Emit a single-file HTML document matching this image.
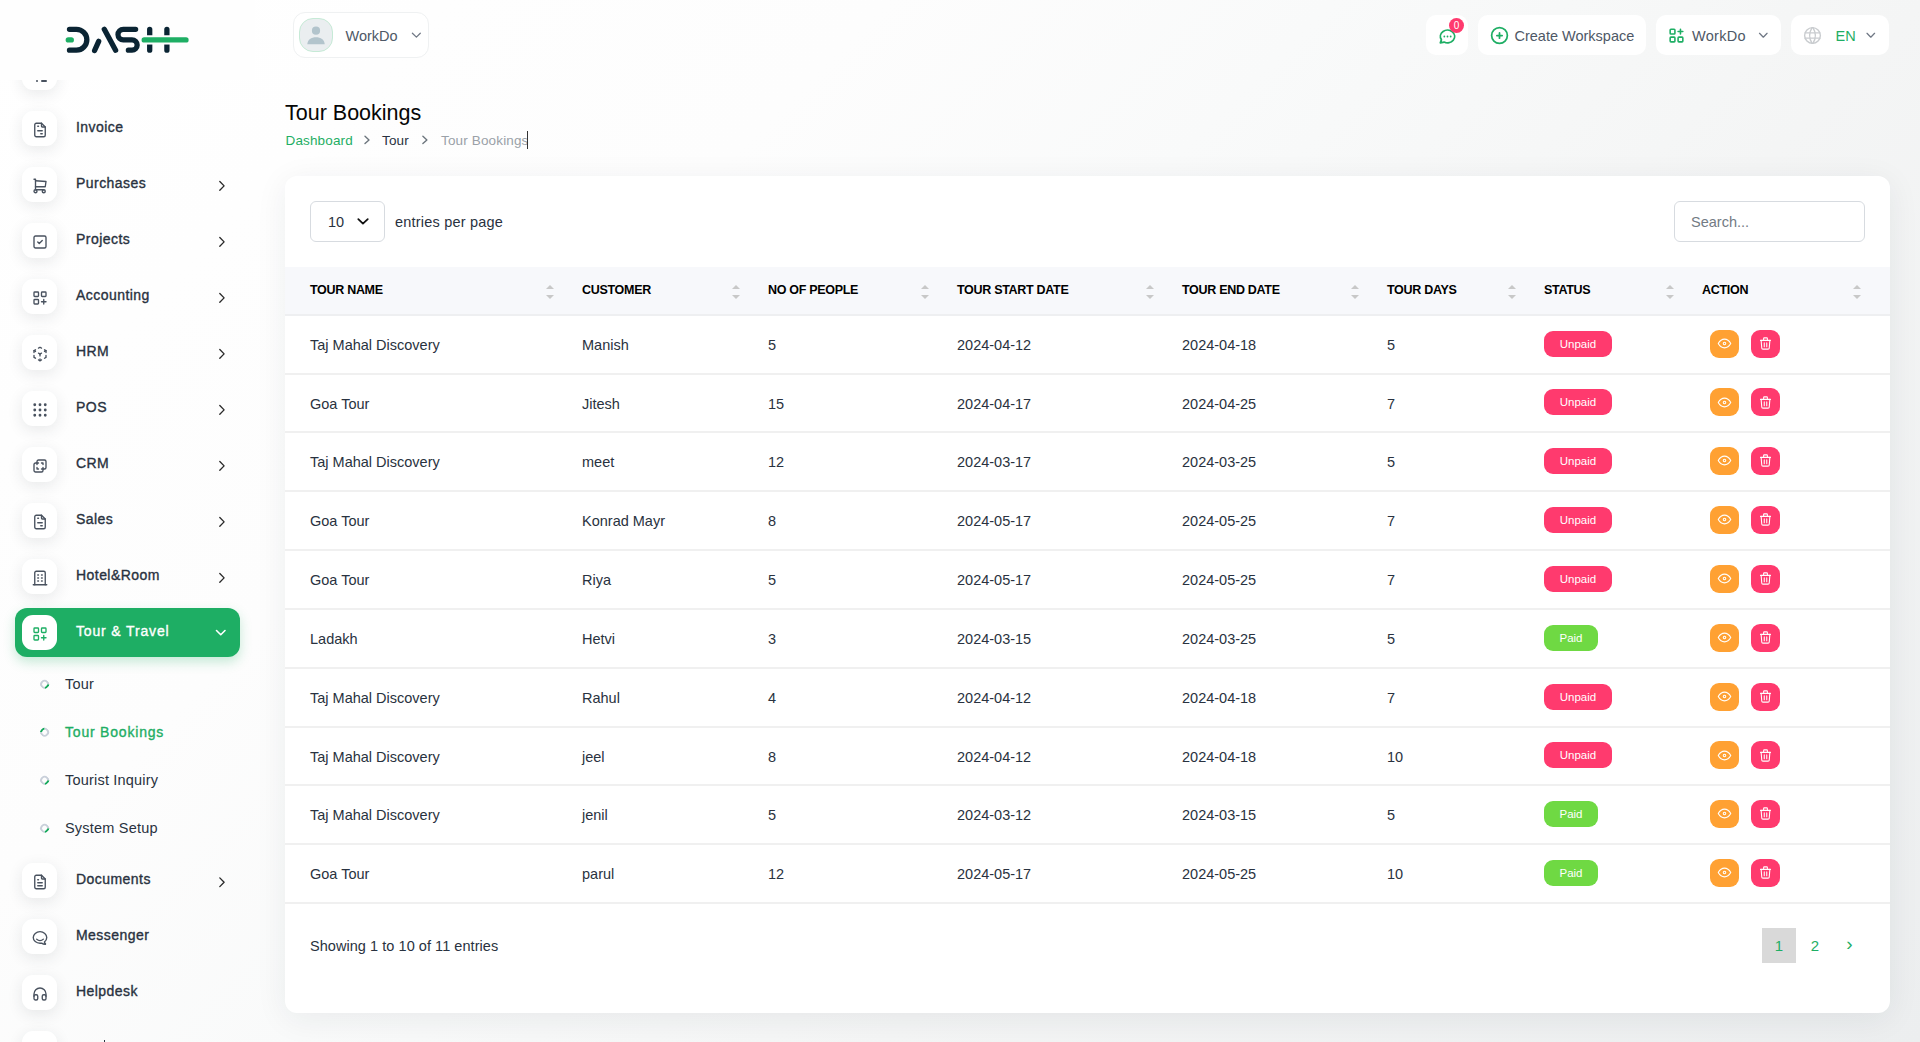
<!DOCTYPE html>
<html><head><meta charset="utf-8">
<style>
*{box-sizing:border-box;margin:0;padding:0}
html,body{width:1920px;height:1042px;overflow:hidden}
body{font-family:"Liberation Sans",sans-serif;color:#293240;position:relative;
background:linear-gradient(135deg,#ffffff 0%,#fdfdfd 30%,#f9fafa 45%,#f4f5f5 65%,#eceeef 100%)}
svg{display:block}
.sb-cover{position:absolute;left:0;top:0;width:255px;height:80px;background:#fefefe;z-index:5}
.ibox{position:absolute;left:22px;width:35px;height:35px;border-radius:11px;background:#fff;
box-shadow:0 4px 15px rgba(40,50,60,.1);display:flex;align-items:center;justify-content:center}
.ibox svg{width:18px;height:18px;margin-top:2px;fill:none;stroke:#49525f;stroke-width:1.8;stroke-linecap:round;stroke-linejoin:round}
.stxt{position:absolute;left:76px;font-size:14px;font-weight:400;letter-spacing:.45px;-webkit-text-stroke:.35px currentColor;color:#293240;white-space:nowrap;line-height:20px}
.chev{position:absolute;left:216px;width:10px;height:10px}
.chev svg{width:10px;height:10px;fill:none;stroke:#293240;stroke-width:2.6;stroke-linecap:round;stroke-linejoin:round}
.chev-w svg{stroke:#fff}
.active-pill{position:absolute;left:15px;top:608px;width:225px;height:49px;border-radius:12px;background:#1eae64;box-shadow:0 5px 12px rgba(30,174,100,.25)}
.act-ibox{box-shadow:none}
.act-ibox svg{stroke:#1eae64}
.sub{position:absolute;left:65px;font-size:14.5px;color:#293240;white-space:nowrap;line-height:20px;letter-spacing:.2px}
.sub-act{color:#1eae64;font-size:14px;letter-spacing:.8px;-webkit-text-stroke:.35px currentColor}
.bul{position:absolute;left:40px;width:8.5px;height:8.5px;border-radius:50%;border:2px solid #c9d0da;border-bottom-color:#13a85a;transform:rotate(-45deg)}
.bul-act{border-bottom-color:#c9d0da;border-top-color:#13a85a}
.hdd{position:absolute;border:1px solid #eff1f2;border-radius:12px;background:#fff}
.avatar{position:absolute;left:299px;top:18px;width:34px;height:34px;border-radius:14px;background:#eaeef0;border:1px solid #c6ead6;overflow:hidden}
.htxt{position:absolute;font-size:14.5px;color:#4e5866;white-space:nowrap;line-height:20px;margin-top:1px}
.hchev{position:absolute;width:12px;height:12px}
.hchev svg{width:12px;height:12px;fill:none;stroke:#5d6672;stroke-width:2;stroke-linecap:round;stroke-linejoin:round}
.hbtn{position:absolute;top:15px;height:40px;background:#fff;border-radius:10px}
.gicon{position:absolute}
.gicon svg{width:100%;height:100%;fill:none;stroke:#1eae64;stroke-width:2;stroke-linecap:round;stroke-linejoin:round}
.globe svg{stroke:#c9cccf;stroke-width:1.6}
.en{color:#1eae64}
.nbadge{position:absolute;left:23px;top:2.5px;width:15px;height:15px;border-radius:50%;background:#ff3a6e;color:#fff;font-size:10px;line-height:15px;text-align:center}
.title{position:absolute;left:285px;top:100px;font-size:21.5px;color:#060606;white-space:nowrap;line-height:26px}
.bc{position:absolute;top:132px;font-size:13.5px;letter-spacing:.15px;white-space:nowrap;line-height:18px}
.bchev{position:absolute;top:134px;width:10px;height:10px}
.bchev svg{width:10px;height:10px;fill:none;stroke:#6c757d;stroke-width:2;stroke-linecap:round;stroke-linejoin:round}
.card{position:absolute;left:285px;top:176px;width:1605px;height:837px;background:#fff;border-radius:12px;box-shadow:0 6px 32px rgba(30,40,50,.07)}
.sel{position:absolute;left:25px;top:25px;width:75px;height:41px;border:1px solid #d7dbe0;border-radius:6px}
.seltxt{position:absolute;left:17px;top:10px;font-size:14.5px;color:#293240;line-height:20px}
.selchev{position:absolute;left:46px;top:14px;width:13px;height:13px}
.selchev svg{width:13px;height:13px;fill:none;stroke:#222;stroke-width:2.2;stroke-linecap:round;stroke-linejoin:round}
.ctxt{position:absolute;font-size:14.5px;letter-spacing:.2px;color:#293240;white-space:nowrap;line-height:20px}
.search{position:absolute;left:1389px;top:25px;width:191px;height:41px;border:1px solid #d7dbe0;border-radius:6px}
.search span{position:absolute;left:16px;top:10px;font-size:14.5px;color:#737b84;line-height:20px}
.thead{position:absolute;left:0;top:91px;width:1605px;height:49px;background:#f7f8fb;border-bottom:2px solid #eeeff1}
.th{position:absolute;top:90px;height:48px;line-height:48px;font-size:12.5px;font-weight:700;color:#000;white-space:nowrap;letter-spacing:-.3px}
.sort{position:absolute;top:109px;width:8px;height:14px}
.sort:before,.sort:after{content:"";position:absolute;left:0;border-left:4px solid transparent;border-right:4px solid transparent}
.sort:before{top:0;border-bottom:4px solid #c8c8c8}
.sort:after{top:9.5px;border-top:4px solid #c8c8c8}
.rline{position:absolute;left:0;width:1605px;height:2px;background:#f0f0f0}
.td{position:absolute;font-size:14.5px;color:#293240;white-space:nowrap;line-height:21px;margin-top:1px}
.badge{position:absolute;height:26px;border-radius:9px;color:#fff;font-size:11.5px;line-height:26px;text-align:center}
.unpaid{background:#ff3a6e}
.paid{background:#6fd943}
.act{position:absolute;width:29px;height:28px;border-radius:9px;display:flex;align-items:center;justify-content:center}
.act svg{width:15px;height:15px;fill:none;stroke:#fff;stroke-width:1.7;stroke-linecap:round;stroke-linejoin:round}
.orange{background:#ffa133}
.pink{background:#ff3a6e}
.pg1{position:absolute;left:1477px;top:752px;width:34px;height:35px;background:#d9d9d9;color:#1eae64;font-size:15px;line-height:35px;text-align:center}
.pgn{position:absolute;top:752px;width:34px;height:35px;color:#1eae64;font-size:15px;line-height:35px;text-align:center}

</style></head><body>
<div class="ibox" style="top:55.0px"><svg viewBox="0 0 24 24" class="" ></svg></div>
<div class="ibox" style="top:111.0px"><svg viewBox="0 0 24 24" class="" ><path d="M14 3v4a1 1 0 0 0 1 1h4"/><path d="M17 21h-10a2 2 0 0 1 -2 -2v-14a2 2 0 0 1 2 -2h7l5 5v11a2 2 0 0 1 -2 2z"/><path d="M9 7h1"/><path d="M9 13h6"/><path d="M13 17h2"/></svg></div>
<div class="stxt" style="top:117.0px">Invoice</div>
<div class="ibox" style="top:167.0px"><svg viewBox="0 0 24 24" class="" ><circle cx="6" cy="19" r="2"/><circle cx="17" cy="19" r="2"/><path d="M17 17h-11v-14h-2"/><path d="M6 5l14 1l-1 7h-13"/></svg></div>
<div class="stxt" style="top:173.0px">Purchases</div>
<div class="ibox" style="top:223.0px"><svg viewBox="0 0 24 24" class="" ><rect x="4" y="4" width="16" height="16" rx="2"/><path d="M9 12l2 2l4 -4"/></svg></div>
<div class="stxt" style="top:229.0px">Projects</div>
<div class="ibox" style="top:279.0px"><svg viewBox="0 0 24 24" class="" ><rect x="4" y="4" width="6" height="6" rx="1"/><rect x="14" y="4" width="6" height="6" rx="1"/><rect x="4" y="14" width="6" height="6" rx="1"/><path d="M14 17h6m-3 -3v6"/></svg></div>
<div class="stxt" style="top:285.0px">Accounting</div>
<div class="ibox" style="top:335.0px"><svg viewBox="0 0 24 24" class="" ><path d="M6 17.6l-2 -1.1v-2.5"/><path d="M4 10v-2.5l2 -1.1"/><path d="M10 4.1l2 -1.1l2 1.1"/><path d="M18 6.4l2 1.1v2.5"/><path d="M20 14v2.5l-2 1.12"/><path d="M14 19.9l-2 1.1l-2 -1.1"/><path d="M12 12l2 -1.1"/><path d="M18 8.6l2 -1.1"/><path d="M12 12v2.5"/><path d="M12 18.5v2.5"/><path d="M12 12l-2 -1.12"/><path d="M6 8.6l-2 -1.1"/></svg></div>
<div class="stxt" style="top:341.0px">HRM</div>
<div class="ibox" style="top:391.0px"><svg viewBox="0 0 24 24" class="" ><circle cx="5" cy="5" r="1"/><circle cx="12" cy="5" r="1"/><circle cx="19" cy="5" r="1"/><circle cx="5" cy="12" r="1"/><circle cx="12" cy="12" r="1"/><circle cx="19" cy="12" r="1"/><circle cx="5" cy="19" r="1"/><circle cx="12" cy="19" r="1"/><circle cx="19" cy="19" r="1"/></svg></div>
<div class="stxt" style="top:397.0px">POS</div>
<div class="ibox" style="top:447.0px"><svg viewBox="0 0 24 24" class="" ><path d="M16 16v2a2 2 0 0 1 -2 2h-8a2 2 0 0 1 -2 -2v-8a2 2 0 0 1 2 -2h2v-2a2 2 0 0 1 2 -2h8a2 2 0 0 1 2 2v8a2 2 0 0 1 -2 2h-2"/><path d="M10 8h-2v2"/><path d="M8 14v2h2"/><path d="M14 8h2v2"/><path d="M16 14v2h-2"/></svg></div>
<div class="stxt" style="top:453.0px">CRM</div>
<div class="ibox" style="top:503.0px"><svg viewBox="0 0 24 24" class="" ><path d="M14 3v4a1 1 0 0 0 1 1h4"/><path d="M17 21h-10a2 2 0 0 1 -2 -2v-14a2 2 0 0 1 2 -2h7l5 5v11a2 2 0 0 1 -2 2z"/><path d="M9 7h1"/><path d="M9 13h6"/><path d="M13 17h2"/></svg></div>
<div class="stxt" style="top:509.0px">Sales</div>
<div class="ibox" style="top:559.0px"><svg viewBox="0 0 24 24" class="" ><path d="M3 21h18"/><path d="M9 8h1"/><path d="M9 12h1"/><path d="M9 16h1"/><path d="M14 8h1"/><path d="M14 12h1"/><path d="M14 16h1"/><path d="M5 21v-16a2 2 0 0 1 2 -2h10a2 2 0 0 1 2 2v16"/></svg></div>
<div class="stxt" style="top:565.0px">Hotel&Room</div>
<div class="active-pill"></div>
<div class="ibox act-ibox" style="top:615px"><svg viewBox="0 0 24 24" class="" ><rect x="4" y="4" width="6" height="6" rx="1"/><rect x="14" y="4" width="6" height="6" rx="1"/><rect x="4" y="14" width="6" height="6" rx="1"/><path d="M14 17h6m-3 -3v6"/></svg></div>
<div class="stxt" style="top:620.5px;color:#fff;letter-spacing:.85px">Tour &amp; Travel</div>
<div class="bul" style="top:680.0px"></div>
<div class="sub" style="top:674.0px">Tour</div>
<div class="bul bul-act" style="top:728.0px"></div>
<div class="sub sub-act" style="top:722.0px">Tour Bookings</div>
<div class="bul" style="top:776.0px"></div>
<div class="sub" style="top:770.0px">Tourist Inquiry</div>
<div class="bul" style="top:824.0px"></div>
<div class="sub" style="top:818.0px">System Setup</div>
<div class="ibox" style="top:863.4px"><svg viewBox="0 0 24 24" class="" ><path d="M14 3v4a1 1 0 0 0 1 1h4"/><path d="M17 21h-10a2 2 0 0 1 -2 -2v-14a2 2 0 0 1 2 -2h7l5 5v11a2 2 0 0 1 -2 2z"/><path d="M9 9h1"/><path d="M9 13h6"/><path d="M9 17h6"/></svg></div>
<div class="stxt" style="top:869.4px">Documents</div>
<div class="ibox" style="top:919.4px"><svg viewBox="0 0 24 24" class="" ><path d="M17.802 17.292s.077 -.055 .2 -.149c1.843 -1.425 3 -3.49 3 -5.789c0 -4.286 -4.03 -7.764 -9 -7.764c-4.97 0 -9 3.478 -9 7.764c0 4.288 4.03 7.646 9 7.646c.424 0 1.12 -.028 2.088 -.084c1.262 .82 3.104 1.493 4.716 1.493c.499 0 .734 -.41 .414 -.828c-.486 -.596 -1.156 -1.551 -1.416 -2.29z"/><path d="M7.5 13.5c2.5 2.5 6.5 2.5 9 0"/></svg></div>
<div class="stxt" style="top:925.4px">Messenger</div>
<div class="ibox" style="top:975.4px"><svg viewBox="0 0 24 24" class="" ><path d="M4 15a2 2 0 0 1 2 -2h1a2 2 0 0 1 2 2v3a2 2 0 0 1 -2 2h-1a2 2 0 0 1 -2 -2v-3"/><path d="M15 15a2 2 0 0 1 2 -2h1a2 2 0 0 1 2 2v3a2 2 0 0 1 -2 2h-1a2 2 0 0 1 -2 -2v-3"/><path d="M4 15v-3a8 8 0 0 1 16 0v3"/></svg></div>
<div class="stxt" style="top:981.4px">Helpdesk</div>
<div class="ibox" style="top:1031.4px"><svg viewBox="0 0 24 24" class="" ></svg></div>
<div style="position:absolute;left:36px;top:80px;width:2px;height:1.5px;background:#49525f;border-radius:1px"></div><div style="position:absolute;left:41px;top:80px;width:6px;height:1.5px;background:#49525f;border-radius:1px"></div>
<div style="position:absolute;left:103.5px;top:1040.3px;width:1.6px;height:2px;background:#293240"></div>
<div class="sb-cover"></div>
<svg class="logo" viewBox="0 0 1920 1042" style="position:absolute;left:0;top:0;width:1920px;height:1042px;z-index:6;pointer-events:none">
<g fill="none" stroke-linecap="round" stroke-width="5.3">
<path stroke="#0a2433" d="M69.5 29.3H76.4A10.45 10.45 0 0 1 76.4 50.2H69.5"/>
<path stroke="#1eae64" d="M68.3 39.9H71.3"/>
<path stroke="#0a2433" d="M94.6 50.5L98.7 41.3M104.3 29.3L115.6 50.2"/>
<path stroke="#0a2433" d="M135.6 29.3H123.3A5.3 5.3 0 0 0 123.3 39.9H132A5.15 5.15 0 0 1 132 50.2H128.4"/>
<path stroke="#0a2433" d="M149.7 29.3V50.2M166.9 29.3V50.2"/>
<path stroke="#fdfdfd" stroke-width="9.3" stroke-linecap="butt" d="M145 39.9H171"/>
<path stroke="#1eae64" d="M144.2 39.9H186"/>
</g></svg>
<div class="hdd" style="left:293px;top:12px;width:136px;height:46px"></div>
<div class="avatar"><svg viewBox="0 0 34 34" width="34" height="34" style="position:absolute;left:-1px;top:-1px"><circle cx="17" cy="12.7" r="4.1" fill="#b2c4cc"/><path d="M8.3 26.2C8.5 21.8 12.3 19.2 17 19.2S25.5 21.8 25.7 26.2Z" fill="#b2c4cc"/></svg></div>
<div class="htxt" style="left:345.5px;top:25px">WorkDo</div>
<div class="hbtn" style="left:1426px;width:42px"><div class="gicon" style="left:11.5px;top:11.5px;width:19px;height:19px"><svg viewBox="0 0 24 24" class="" style="stroke-width:2.3"><path d="M3 20l1.3 -3.9c-2.324 -3.437 -1.426 -7.872 2.1 -10.374c3.526 -2.501 8.59 -2.296 11.845 .48c3.255 2.777 3.695 7.266 1.029 10.501c-2.666 3.235 -7.615 4.215 -11.574 2.293l-4.7 1"/><path d="M12 12v.01"/><path d="M8 12v.01"/><path d="M16 12v.01"/></svg></div><div class="nbadge">0</div></div>
<div class="hbtn" style="left:1478px;width:168px"><div class="gicon" style="left:10.5px;top:9.5px;width:21px;height:21px"><svg viewBox="0 0 24 24" class="" ><circle cx="12" cy="12" r="9"/><path d="M9 12h6"/><path d="M12 9v6"/></svg></div><div class="htxt" style="left:36.5px;top:10px">Create Workspace</div></div>
<div class="hbtn" style="left:1656px;width:125px"><div class="gicon" style="left:11px;top:11px;width:19px;height:19px"><svg viewBox="0 0 24 24" class="" ><rect x="4" y="4" width="6" height="6" rx="1"/><rect x="4" y="14" width="6" height="6" rx="1"/><rect x="14" y="14" width="6" height="6" rx="1"/><path d="M14 7h6m-3 -3v6"/></svg></div><div class="htxt" style="left:36px;top:10px;letter-spacing:.3px">WorkDo</div></div>
<div class="hbtn" style="left:1791px;width:98px"><div class="gicon globe" style="left:10.5px;top:9.5px;width:21px;height:21px"><svg viewBox="0 0 24 24" class="" ><circle cx="12" cy="12" r="9"/><path d="M3.6 9h16.8"/><path d="M3.6 15h16.8"/><path d="M11.5 3a17 17 0 0 0 0 18"/><path d="M12.5 3a17 17 0 0 1 0 18"/></svg></div><div class="htxt en" style="left:44.5px;top:10px">EN</div></div>
<div class="title">Tour Bookings</div>
<div class="bc" style="left:285.5px;color:#1eae64">Dashboard</div>
<div class="bc" style="left:382px;color:#293240">Tour</div>
<div class="bc" style="left:441px;color:#9aa1a8">Tour Bookings</div>
<div style="position:absolute;left:527px;top:131px;width:1px;height:18px;background:#333"></div>
<div class="card">
<div class="sel"><span class="seltxt">10</span></div>
<div class="ctxt" style="left:110px;top:35.5px">entries per page</div>
<div class="search"><span>Search...</span></div>
<div class="thead"></div>
<div class="th" style="left:25px">TOUR NAME</div>
<div class="sort" style="left:261px"></div>
<div class="th" style="left:297px">CUSTOMER</div>
<div class="sort" style="left:447px"></div>
<div class="th" style="left:483px">NO OF PEOPLE</div>
<div class="sort" style="left:636px"></div>
<div class="th" style="left:672px">TOUR START DATE</div>
<div class="sort" style="left:861px"></div>
<div class="th" style="left:897px">TOUR END DATE</div>
<div class="sort" style="left:1066px"></div>
<div class="th" style="left:1102px">TOUR DAYS</div>
<div class="sort" style="left:1223px"></div>
<div class="th" style="left:1259px">STATUS</div>
<div class="sort" style="left:1381px"></div>
<div class="th" style="left:1417px">ACTION</div>
<div class="sort" style="left:1568px"></div>
<div class="rline" style="top:197.00px"></div>
<div class="td" style="left:25px;top:158.00px">Taj Mahal Discovery</div>
<div class="td" style="left:297px;top:158.00px">Manish</div>
<div class="td" style="left:483px;top:158.00px">5</div>
<div class="td" style="left:672px;top:158.00px">2024-04-12</div>
<div class="td" style="left:897px;top:158.00px">2024-04-18</div>
<div class="td" style="left:1102px;top:158.00px">5</div>
<div class="badge unpaid" style="left:1259px;top:154.70px;width:68px">Unpaid</div>
<div class="act orange" style="left:1425px;top:153.50px"><svg viewBox="0 0 24 24" class="" ><circle cx="12" cy="12" r="2"/><path d="M22 12c-2.667 4.667 -6 7 -10 7s-7.333 -2.333 -10 -7c2.667 -4.667 6 -7 10 -7s7.333 2.333 10 7"/></svg></div>
<div class="act pink" style="left:1466px;top:153.50px"><svg viewBox="0 0 24 24" class="" ><path d="M4 7h16"/><path d="M10 11v6"/><path d="M14 11v6"/><path d="M5 7l1 12a2 2 0 0 0 2 2h8a2 2 0 0 0 2 -2l1 -12"/><path d="M9 7v-3a1 1 0 0 1 1 -1h4a1 1 0 0 1 1 1v3"/></svg></div>
<div class="rline" style="top:255.00px"></div>
<div class="td" style="left:25px;top:216.50px">Goa Tour</div>
<div class="td" style="left:297px;top:216.50px">Jitesh</div>
<div class="td" style="left:483px;top:216.50px">15</div>
<div class="td" style="left:672px;top:216.50px">2024-04-17</div>
<div class="td" style="left:897px;top:216.50px">2024-04-25</div>
<div class="td" style="left:1102px;top:216.50px">7</div>
<div class="badge unpaid" style="left:1259px;top:213.20px;width:68px">Unpaid</div>
<div class="act orange" style="left:1425px;top:212.00px"><svg viewBox="0 0 24 24" class="" ><circle cx="12" cy="12" r="2"/><path d="M22 12c-2.667 4.667 -6 7 -10 7s-7.333 -2.333 -10 -7c2.667 -4.667 6 -7 10 -7s7.333 2.333 10 7"/></svg></div>
<div class="act pink" style="left:1466px;top:212.00px"><svg viewBox="0 0 24 24" class="" ><path d="M4 7h16"/><path d="M10 11v6"/><path d="M14 11v6"/><path d="M5 7l1 12a2 2 0 0 0 2 2h8a2 2 0 0 0 2 -2l1 -12"/><path d="M9 7v-3a1 1 0 0 1 1 -1h4a1 1 0 0 1 1 1v3"/></svg></div>
<div class="rline" style="top:314.00px"></div>
<div class="td" style="left:25px;top:275.00px">Taj Mahal Discovery</div>
<div class="td" style="left:297px;top:275.00px">meet</div>
<div class="td" style="left:483px;top:275.00px">12</div>
<div class="td" style="left:672px;top:275.00px">2024-03-17</div>
<div class="td" style="left:897px;top:275.00px">2024-03-25</div>
<div class="td" style="left:1102px;top:275.00px">5</div>
<div class="badge unpaid" style="left:1259px;top:271.70px;width:68px">Unpaid</div>
<div class="act orange" style="left:1425px;top:270.50px"><svg viewBox="0 0 24 24" class="" ><circle cx="12" cy="12" r="2"/><path d="M22 12c-2.667 4.667 -6 7 -10 7s-7.333 -2.333 -10 -7c2.667 -4.667 6 -7 10 -7s7.333 2.333 10 7"/></svg></div>
<div class="act pink" style="left:1466px;top:270.50px"><svg viewBox="0 0 24 24" class="" ><path d="M4 7h16"/><path d="M10 11v6"/><path d="M14 11v6"/><path d="M5 7l1 12a2 2 0 0 0 2 2h8a2 2 0 0 0 2 -2l1 -12"/><path d="M9 7v-3a1 1 0 0 1 1 -1h4a1 1 0 0 1 1 1v3"/></svg></div>
<div class="rline" style="top:373.00px"></div>
<div class="td" style="left:25px;top:334.00px">Goa Tour</div>
<div class="td" style="left:297px;top:334.00px">Konrad Mayr</div>
<div class="td" style="left:483px;top:334.00px">8</div>
<div class="td" style="left:672px;top:334.00px">2024-05-17</div>
<div class="td" style="left:897px;top:334.00px">2024-05-25</div>
<div class="td" style="left:1102px;top:334.00px">7</div>
<div class="badge unpaid" style="left:1259px;top:330.70px;width:68px">Unpaid</div>
<div class="act orange" style="left:1425px;top:329.50px"><svg viewBox="0 0 24 24" class="" ><circle cx="12" cy="12" r="2"/><path d="M22 12c-2.667 4.667 -6 7 -10 7s-7.333 -2.333 -10 -7c2.667 -4.667 6 -7 10 -7s7.333 2.333 10 7"/></svg></div>
<div class="act pink" style="left:1466px;top:329.50px"><svg viewBox="0 0 24 24" class="" ><path d="M4 7h16"/><path d="M10 11v6"/><path d="M14 11v6"/><path d="M5 7l1 12a2 2 0 0 0 2 2h8a2 2 0 0 0 2 -2l1 -12"/><path d="M9 7v-3a1 1 0 0 1 1 -1h4a1 1 0 0 1 1 1v3"/></svg></div>
<div class="rline" style="top:432.00px"></div>
<div class="td" style="left:25px;top:393.00px">Goa Tour</div>
<div class="td" style="left:297px;top:393.00px">Riya</div>
<div class="td" style="left:483px;top:393.00px">5</div>
<div class="td" style="left:672px;top:393.00px">2024-05-17</div>
<div class="td" style="left:897px;top:393.00px">2024-05-25</div>
<div class="td" style="left:1102px;top:393.00px">7</div>
<div class="badge unpaid" style="left:1259px;top:389.70px;width:68px">Unpaid</div>
<div class="act orange" style="left:1425px;top:388.50px"><svg viewBox="0 0 24 24" class="" ><circle cx="12" cy="12" r="2"/><path d="M22 12c-2.667 4.667 -6 7 -10 7s-7.333 -2.333 -10 -7c2.667 -4.667 6 -7 10 -7s7.333 2.333 10 7"/></svg></div>
<div class="act pink" style="left:1466px;top:388.50px"><svg viewBox="0 0 24 24" class="" ><path d="M4 7h16"/><path d="M10 11v6"/><path d="M14 11v6"/><path d="M5 7l1 12a2 2 0 0 0 2 2h8a2 2 0 0 0 2 -2l1 -12"/><path d="M9 7v-3a1 1 0 0 1 1 -1h4a1 1 0 0 1 1 1v3"/></svg></div>
<div class="rline" style="top:491.00px"></div>
<div class="td" style="left:25px;top:452.00px">Ladakh</div>
<div class="td" style="left:297px;top:452.00px">Hetvi</div>
<div class="td" style="left:483px;top:452.00px">3</div>
<div class="td" style="left:672px;top:452.00px">2024-03-15</div>
<div class="td" style="left:897px;top:452.00px">2024-03-25</div>
<div class="td" style="left:1102px;top:452.00px">5</div>
<div class="badge paid" style="left:1259px;top:448.70px;width:54px">Paid</div>
<div class="act orange" style="left:1425px;top:447.50px"><svg viewBox="0 0 24 24" class="" ><circle cx="12" cy="12" r="2"/><path d="M22 12c-2.667 4.667 -6 7 -10 7s-7.333 -2.333 -10 -7c2.667 -4.667 6 -7 10 -7s7.333 2.333 10 7"/></svg></div>
<div class="act pink" style="left:1466px;top:447.50px"><svg viewBox="0 0 24 24" class="" ><path d="M4 7h16"/><path d="M10 11v6"/><path d="M14 11v6"/><path d="M5 7l1 12a2 2 0 0 0 2 2h8a2 2 0 0 0 2 -2l1 -12"/><path d="M9 7v-3a1 1 0 0 1 1 -1h4a1 1 0 0 1 1 1v3"/></svg></div>
<div class="rline" style="top:550.00px"></div>
<div class="td" style="left:25px;top:511.00px">Taj Mahal Discovery</div>
<div class="td" style="left:297px;top:511.00px">Rahul</div>
<div class="td" style="left:483px;top:511.00px">4</div>
<div class="td" style="left:672px;top:511.00px">2024-04-12</div>
<div class="td" style="left:897px;top:511.00px">2024-04-18</div>
<div class="td" style="left:1102px;top:511.00px">7</div>
<div class="badge unpaid" style="left:1259px;top:507.70px;width:68px">Unpaid</div>
<div class="act orange" style="left:1425px;top:506.50px"><svg viewBox="0 0 24 24" class="" ><circle cx="12" cy="12" r="2"/><path d="M22 12c-2.667 4.667 -6 7 -10 7s-7.333 -2.333 -10 -7c2.667 -4.667 6 -7 10 -7s7.333 2.333 10 7"/></svg></div>
<div class="act pink" style="left:1466px;top:506.50px"><svg viewBox="0 0 24 24" class="" ><path d="M4 7h16"/><path d="M10 11v6"/><path d="M14 11v6"/><path d="M5 7l1 12a2 2 0 0 0 2 2h8a2 2 0 0 0 2 -2l1 -12"/><path d="M9 7v-3a1 1 0 0 1 1 -1h4a1 1 0 0 1 1 1v3"/></svg></div>
<div class="rline" style="top:608.00px"></div>
<div class="td" style="left:25px;top:569.50px">Taj Mahal Discovery</div>
<div class="td" style="left:297px;top:569.50px">jeel</div>
<div class="td" style="left:483px;top:569.50px">8</div>
<div class="td" style="left:672px;top:569.50px">2024-04-12</div>
<div class="td" style="left:897px;top:569.50px">2024-04-18</div>
<div class="td" style="left:1102px;top:569.50px">10</div>
<div class="badge unpaid" style="left:1259px;top:566.20px;width:68px">Unpaid</div>
<div class="act orange" style="left:1425px;top:565.00px"><svg viewBox="0 0 24 24" class="" ><circle cx="12" cy="12" r="2"/><path d="M22 12c-2.667 4.667 -6 7 -10 7s-7.333 -2.333 -10 -7c2.667 -4.667 6 -7 10 -7s7.333 2.333 10 7"/></svg></div>
<div class="act pink" style="left:1466px;top:565.00px"><svg viewBox="0 0 24 24" class="" ><path d="M4 7h16"/><path d="M10 11v6"/><path d="M14 11v6"/><path d="M5 7l1 12a2 2 0 0 0 2 2h8a2 2 0 0 0 2 -2l1 -12"/><path d="M9 7v-3a1 1 0 0 1 1 -1h4a1 1 0 0 1 1 1v3"/></svg></div>
<div class="rline" style="top:667.00px"></div>
<div class="td" style="left:25px;top:628.00px">Taj Mahal Discovery</div>
<div class="td" style="left:297px;top:628.00px">jenil</div>
<div class="td" style="left:483px;top:628.00px">5</div>
<div class="td" style="left:672px;top:628.00px">2024-03-12</div>
<div class="td" style="left:897px;top:628.00px">2024-03-15</div>
<div class="td" style="left:1102px;top:628.00px">5</div>
<div class="badge paid" style="left:1259px;top:624.70px;width:54px">Paid</div>
<div class="act orange" style="left:1425px;top:623.50px"><svg viewBox="0 0 24 24" class="" ><circle cx="12" cy="12" r="2"/><path d="M22 12c-2.667 4.667 -6 7 -10 7s-7.333 -2.333 -10 -7c2.667 -4.667 6 -7 10 -7s7.333 2.333 10 7"/></svg></div>
<div class="act pink" style="left:1466px;top:623.50px"><svg viewBox="0 0 24 24" class="" ><path d="M4 7h16"/><path d="M10 11v6"/><path d="M14 11v6"/><path d="M5 7l1 12a2 2 0 0 0 2 2h8a2 2 0 0 0 2 -2l1 -12"/><path d="M9 7v-3a1 1 0 0 1 1 -1h4a1 1 0 0 1 1 1v3"/></svg></div>
<div class="rline" style="top:726.00px"></div>
<div class="td" style="left:25px;top:687.00px">Goa Tour</div>
<div class="td" style="left:297px;top:687.00px">parul</div>
<div class="td" style="left:483px;top:687.00px">12</div>
<div class="td" style="left:672px;top:687.00px">2024-05-17</div>
<div class="td" style="left:897px;top:687.00px">2024-05-25</div>
<div class="td" style="left:1102px;top:687.00px">10</div>
<div class="badge paid" style="left:1259px;top:683.70px;width:54px">Paid</div>
<div class="act orange" style="left:1425px;top:682.50px"><svg viewBox="0 0 24 24" class="" ><circle cx="12" cy="12" r="2"/><path d="M22 12c-2.667 4.667 -6 7 -10 7s-7.333 -2.333 -10 -7c2.667 -4.667 6 -7 10 -7s7.333 2.333 10 7"/></svg></div>
<div class="act pink" style="left:1466px;top:682.50px"><svg viewBox="0 0 24 24" class="" ><path d="M4 7h16"/><path d="M10 11v6"/><path d="M14 11v6"/><path d="M5 7l1 12a2 2 0 0 0 2 2h8a2 2 0 0 0 2 -2l1 -12"/><path d="M9 7v-3a1 1 0 0 1 1 -1h4a1 1 0 0 1 1 1v3"/></svg></div>
<div class="ctxt" style="left:25px;top:760px;letter-spacing:.05px">Showing 1 to 10 of 11 entries</div>
<div class="pg1">1</div><div class="pgn" style="left:1513px">2</div><div class="pgn" style="left:1547.5px;font-size:19px;top:750px">&#8250;</div>
</div>
<svg style="position:absolute;left:0;top:0;z-index:20;pointer-events:none" width="1920" height="1042" viewBox="0 0 1920 1042"><g fill="none" stroke-linecap="round" stroke-linejoin="round"><path d="M219.8 181.50L224.1 185.85L219.8 190.20" stroke="#2a2a2a" stroke-width="1.35"/><path d="M219.8 237.50L224.1 241.85L219.8 246.20" stroke="#2a2a2a" stroke-width="1.35"/><path d="M219.8 293.50L224.1 297.85L219.8 302.20" stroke="#2a2a2a" stroke-width="1.35"/><path d="M219.8 349.50L224.1 353.85L219.8 358.20" stroke="#2a2a2a" stroke-width="1.35"/><path d="M219.8 405.50L224.1 409.85L219.8 414.20" stroke="#2a2a2a" stroke-width="1.35"/><path d="M219.8 461.50L224.1 465.85L219.8 470.20" stroke="#2a2a2a" stroke-width="1.35"/><path d="M219.8 517.50L224.1 521.85L219.8 526.20" stroke="#2a2a2a" stroke-width="1.35"/><path d="M219.8 573.50L224.1 577.85L219.8 582.20" stroke="#2a2a2a" stroke-width="1.35"/><path d="M216.5 630.5L220.75 634.75L225 630.5" stroke="#fff" stroke-width="1.6"/><path d="M219.8 877.90L224.1 882.25L219.8 886.60" stroke="#2a2a2a" stroke-width="1.35"/><path d="M412.4 33.25L416.4 37.15L420.3 33.25" stroke="#707885" stroke-width="1.25"/><path d="M1759.5 33.3L1763.3 37.2L1767.1 33.3" stroke="#707885" stroke-width="1.25"/><path d="M1867 33.3L1870.8 37.2L1874.6 33.3" stroke="#707885" stroke-width="1.25"/><path d="M365 136.25L369 139.9L365 143.55" stroke="#6c757d" stroke-width="1.4"/><path d="M422.9 136.25L426.9 139.9L422.9 143.55" stroke="#6c757d" stroke-width="1.4"/><path d="M358.3 219.1L362.95 223.6L367.75 219.1" stroke="#111" stroke-width="1.8"/></g></svg>
</body></html>
